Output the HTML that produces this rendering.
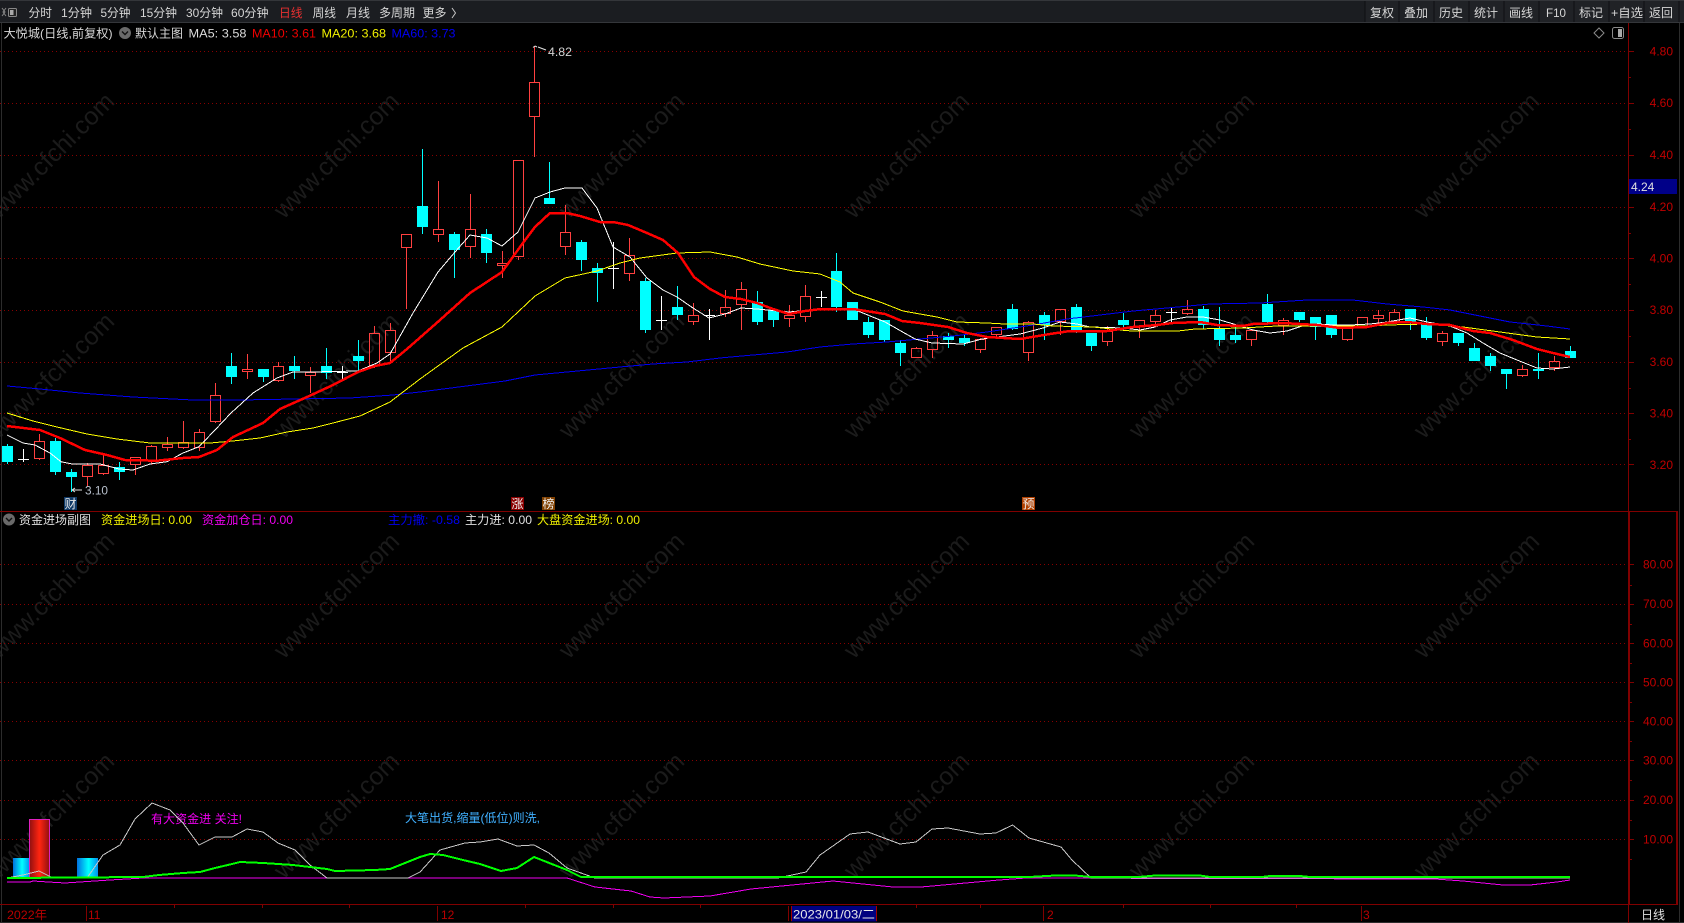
<!DOCTYPE html>
<html lang="zh"><head><meta charset="utf-8"><title>大悦城</title>
<style>
html,body{margin:0;padding:0;background:#000;width:1684px;height:923px;overflow:hidden}
svg{display:block;font-family:"Liberation Sans","Noto Sans CJK SC",sans-serif;font-size:12px}
.tb{fill:#d6d6d6}
.ax{fill:#c00000;text-anchor:end}
.wm text{font-size:25px;fill:#1b1b1b;text-anchor:middle}
</style></head><body>
<svg width="1684" height="923" viewBox="0 0 1684 923" xmlns="http://www.w3.org/2000/svg">
<defs>
<linearGradient id="gc" x1="0" x2="1" y1="0" y2="0"><stop offset="0" stop-color="#0070e0"/><stop offset=".55" stop-color="#00ffff"/><stop offset="1" stop-color="#0090f0"/></linearGradient>
<linearGradient id="gr" x1="0" x2="1" y1="0" y2="0"><stop offset="0" stop-color="#901010"/><stop offset=".5" stop-color="#ff2510"/><stop offset="1" stop-color="#901010"/></linearGradient>
</defs>
<rect width="1684" height="923" fill="#000"/>

<!-- watermarks -->
<g class="wm">
<text x="51" y="164" transform="rotate(-45 51 155)">www.cfchi.com</text><text x="336" y="164" transform="rotate(-45 336 155)">www.cfchi.com</text><text x="621" y="164" transform="rotate(-45 621 155)">www.cfchi.com</text><text x="906" y="164" transform="rotate(-45 906 155)">www.cfchi.com</text><text x="1191" y="164" transform="rotate(-45 1191 155)">www.cfchi.com</text><text x="1476" y="164" transform="rotate(-45 1476 155)">www.cfchi.com</text>
<text x="51" y="384" transform="rotate(-45 51 375)">www.cfchi.com</text><text x="336" y="384" transform="rotate(-45 336 375)">www.cfchi.com</text><text x="621" y="384" transform="rotate(-45 621 375)">www.cfchi.com</text><text x="906" y="384" transform="rotate(-45 906 375)">www.cfchi.com</text><text x="1191" y="384" transform="rotate(-45 1191 375)">www.cfchi.com</text><text x="1476" y="384" transform="rotate(-45 1476 375)">www.cfchi.com</text>
<text x="51" y="604" transform="rotate(-45 51 595)">www.cfchi.com</text><text x="336" y="604" transform="rotate(-45 336 595)">www.cfchi.com</text><text x="621" y="604" transform="rotate(-45 621 595)">www.cfchi.com</text><text x="906" y="604" transform="rotate(-45 906 595)">www.cfchi.com</text><text x="1191" y="604" transform="rotate(-45 1191 595)">www.cfchi.com</text><text x="1476" y="604" transform="rotate(-45 1476 595)">www.cfchi.com</text>
<text x="51" y="824" transform="rotate(-45 51 815)">www.cfchi.com</text><text x="336" y="824" transform="rotate(-45 336 815)">www.cfchi.com</text><text x="621" y="824" transform="rotate(-45 621 815)">www.cfchi.com</text><text x="906" y="824" transform="rotate(-45 906 815)">www.cfchi.com</text><text x="1191" y="824" transform="rotate(-45 1191 815)">www.cfchi.com</text><text x="1476" y="824" transform="rotate(-45 1476 815)">www.cfchi.com</text>
</g>

<!-- toolbar -->
<rect x="0" y="0" width="1684" height="23" fill="#1b1d21"/>
<rect x="0" y="0" width="1684" height="1" fill="#34363a"/>
<rect x="0" y="22" width="1684" height="1" fill="#34363a"/>
<g shape-rendering="crispEdges">
<rect x="1365" y="1" width="319" height="21" fill="#202226"/>
<path d="M1365 1V22M1399 1V22M1434 1V22M1469 1V22M1504 1V22M1539 1V22M1574 1V22M1609 1V22M1644 1V22M1679 1V22" stroke="#0e0f11" stroke-width="1"/>
</g>
<path d="M2 8l3 4-3 4M6 8l-3 4 3 4" fill="none" stroke="#888" stroke-width="1"/>
<rect x="8.5" y="8.5" width="8" height="8" rx="1" fill="#222" stroke="#888"/><rect x="10" y="10" width="3.5" height="5" fill="#aaa"/>
<g class="tb">
<text x="28.5" y="17" textLength="23.5" lengthAdjust="spacingAndGlyphs">分时</text>
<text x="61" y="17" textLength="31" lengthAdjust="spacingAndGlyphs">1分钟</text>
<text x="100.5" y="17" textLength="30" lengthAdjust="spacingAndGlyphs">5分钟</text>
<text x="140" y="17" textLength="37" lengthAdjust="spacingAndGlyphs">15分钟</text>
<text x="186" y="17" textLength="37" lengthAdjust="spacingAndGlyphs">30分钟</text>
<text x="231" y="17" textLength="37.5" lengthAdjust="spacingAndGlyphs">60分钟</text>
<text x="279" y="17" textLength="23.5" lengthAdjust="spacingAndGlyphs" style="fill:#e83030">日线</text>
<text x="312.5" y="17" textLength="23.5" lengthAdjust="spacingAndGlyphs">周线</text>
<text x="346" y="17" textLength="24" lengthAdjust="spacingAndGlyphs">月线</text>
<text x="379" y="17" textLength="36" lengthAdjust="spacingAndGlyphs">多周期</text>
<text x="422.5" y="17" textLength="24" lengthAdjust="spacingAndGlyphs">更多</text>
</g>
<path d="M452 8l3.5 5-3.5 5" fill="none" stroke="#c8c8c8"/>
<g class="tb" text-anchor="start">
<text x="1370" y="17" textLength="24" lengthAdjust="spacingAndGlyphs">复权</text>
<text x="1404" y="17" textLength="24" lengthAdjust="spacingAndGlyphs">叠加</text>
<text x="1439" y="17" textLength="24" lengthAdjust="spacingAndGlyphs">历史</text>
<text x="1474" y="17" textLength="24" lengthAdjust="spacingAndGlyphs">统计</text>
<text x="1509" y="17" textLength="24" lengthAdjust="spacingAndGlyphs">画线</text>
<text x="1546" y="17" textLength="20" lengthAdjust="spacingAndGlyphs">F10</text>
<text x="1579" y="17" textLength="24" lengthAdjust="spacingAndGlyphs">标记</text>
<text x="1611" y="17" textLength="32" lengthAdjust="spacingAndGlyphs">+自选</text>
<text x="1649" y="17" textLength="24" lengthAdjust="spacingAndGlyphs">返回</text>
</g>

<!-- header line -->
<text x="3.5" y="37.5" textLength="109" lengthAdjust="spacingAndGlyphs" fill="#d8d8d8">大悦城(日线,前复权)</text>
<circle cx="125" cy="33" r="6" fill="#6a6a6a"/><path d="M122 31.5l3 3 3-3" fill="none" stroke="#111" stroke-width="1.4"/>
<text x="135" y="37.5" textLength="48" lengthAdjust="spacingAndGlyphs" fill="#d8d8d8">默认主图</text>
<text x="188.5" y="37.5" textLength="58" lengthAdjust="spacingAndGlyphs" fill="#dcdcdc">MA5: 3.58</text>
<text x="252" y="37.5" textLength="64" lengthAdjust="spacingAndGlyphs" fill="#f00000">MA10: 3.61</text>
<text x="321.5" y="37.5" textLength="64.5" lengthAdjust="spacingAndGlyphs" fill="#f0f000">MA20: 3.68</text>
<text x="391.5" y="37.5" textLength="64" lengthAdjust="spacingAndGlyphs" fill="#0000f0">MA60: 3.73</text>
<path d="M1599 28l5 5-5 5-5-5z" fill="none" stroke="#8a8a8a"/>
<rect x="1612.5" y="27.5" width="11" height="11" rx="2" fill="none" stroke="#8a8a8a"/><rect x="1618" y="29" width="4" height="8" fill="#aaa"/>

<!-- grid -->
<g stroke="#880000" stroke-width="1" stroke-dasharray="1 3" shape-rendering="crispEdges">
<path d="M0 51.5H1628M0 103.5H1628M0 155.5H1628M0 207.5H1628M0 258.5H1628M0 310.5H1628M0 362.5H1628M0 413.5H1628M0 464.5H1628"/>
<path d="M0 564.5H1628M0 604.5H1628M0 643.5H1628M0 682.5H1628M0 721.5H1628M0 760.5H1628M0 800.5H1628M0 839.5H1628"/>
</g>

<!-- candles -->
<g shape-rendering="crispEdges" fill="none">
<path stroke="#ff4040" stroke-width="1" d="M34.5 441.5h10v17h-10zM39.5 434V441M39.5 458V460M82.5 465.5h10v11h-10zM87.5 463V465M87.5 476V487M98.5 465.5h10v8h-10zM103.5 453V465M103.5 473V475M130.5 457.5h10v7h-10zM135.5 464V475M146.5 446.5h10v14h-10zM151.5 445V446M151.5 460V464M162.5 444.5h10v3h-10zM167.5 437V444M167.5 447V451M178.5 442.5h10v5h-10zM183.5 421V442M183.5 447V449M194.5 432.5h10v15h-10zM199.5 429V432M199.5 447V451M210.5 395.5h10v26h-10zM215.5 383V395M215.5 421V423M242.5 369.5h10v2h-10zM247.5 354V369M247.5 371V379M273.5 366.5h10v14h-10zM278.5 362V366M278.5 380V382M305.5 372.5h10v3h-10zM310.5 367V372M310.5 375V393M369.5 333.5h10v32h-10zM374.5 326V333M374.5 365V368M385.5 330.5h10v22h-10zM390.5 323V330M390.5 352V363M401.5 234.5h10v13h-10zM406.5 247V309M433.5 229.5h10v5h-10zM438.5 181V229M438.5 234V242M465.5 229.5h10v17h-10zM470.5 194V229M470.5 246V258M497.5 263.5h10v2h-10zM502.5 251V263M502.5 265V278M513.5 160.5h10v96h-10zM518.5 256V260M529.5 82.5h10v34h-10zM534.5 46V82M534.5 116V157M560.5 232.5h10v14h-10zM565.5 205V232M565.5 246V255M624.5 255.5h10v18h-10zM629.5 238V255M629.5 273V281M688.5 315.5h10v6h-10zM693.5 303V315M693.5 321V325M720.5 307.5h10v6h-10zM725.5 290V307M725.5 313V317M736.5 289.5h10v15h-10zM741.5 282V289M741.5 304V330M784.5 315.5h10v3h-10zM789.5 305V315M789.5 318V327M800.5 296.5h10v20h-10zM805.5 285V296M805.5 316V322M911.5 348.5h10v9h-10zM916.5 347V348M916.5 357V358M927.5 335.5h10v14h-10zM932.5 331V335M932.5 349V358M975.5 339.5h10v10h-10zM980.5 338V339M980.5 349V353M991.5 327.5h10v7h-10zM996.5 334V338M1023.5 322.5h10v30h-10zM1028.5 321V322M1028.5 352V361M1055.5 309.5h10v12h-10zM1060.5 321V335M1102.5 331.5h10v10h-10zM1107.5 326V331M1107.5 341V346M1134.5 320.5h10v6h-10zM1139.5 326V338M1150.5 315.5h10v6h-10zM1155.5 310V315M1155.5 321V325M1182.5 309.5h10v4h-10zM1187.5 300V309M1187.5 313V315M1246.5 330.5h10v9h-10zM1251.5 339V346M1278.5 320.5h10v5h-10zM1283.5 318V320M1283.5 325V335M1342.5 327.5h10v12h-10zM1347.5 326V327M1347.5 339V341M1357.5 317.5h10v9h-10zM1373.5 315.5h10v3h-10zM1378.5 310V315M1378.5 318V325M1389.5 312.5h10v9h-10zM1394.5 309V312M1394.5 321V323M1437.5 333.5h10v8h-10zM1442.5 331V333M1442.5 341V346M1517.5 369.5h10v6h-10zM1522.5 365V369M1522.5 375V377M1549.5 361.5h10v6h-10zM1554.5 356V361M1554.5 367V371"/>
<!-- cyan wicks -->
<path stroke="#00ffff" stroke-width="1" d="M7.5 444V464M55.5 438V475M71.5 469V492M119.5 462V480M231.5 353V384M263.5 369V382M294.5 356V379M326.5 348V379M358.5 340V372M422.5 149V234M454.5 232V278M486.5 229V263M549.5 162V204M581.5 240V271M597.5 263V302M645.5 278V333M677.5 286V320M757.5 291V325M773.5 309V327M836.5 253V312M852.5 302V320M868.5 317V338M884.5 320V342M900.5 340V366M948.5 333V348M964.5 335V346M1012.5 304V330M1044.5 312V340M1076.5 304V333M1091.5 333V351M1123.5 313V330M1203.5 306V329M1219.5 307V346M1235.5 327V343M1267.5 294V323M1299.5 312V322M1315.5 317V340M1331.5 315V338M1410.5 309V330M1426.5 317V340M1458.5 333V346M1474.5 343V361M1490.5 353V371M1506.5 369V389M1538.5 353V379M1570.5 346V358"/>
<!-- cyan bodies -->
<path stroke="#00ffff" stroke-width="11" d="M7.5 446V462M55.5 441V472M71.5 472V477M119.5 467V472M231.5 366V377M263.5 369V377M294.5 366V371M326.5 366V373M358.5 356V361M422.5 206V227M454.5 234V250M486.5 234V253M549.5 198V204M581.5 242V260M597.5 268V273M645.5 281V330M677.5 307V315M757.5 302V322M773.5 310V320M836.5 271V307M852.5 302V320M868.5 322V335M884.5 320V340M900.5 343V353M948.5 336V340M964.5 338V343M1012.5 309V329M1044.5 315V325M1076.5 307V330M1091.5 333V346M1123.5 320V325M1203.5 309V325M1219.5 328V340M1235.5 335V340M1267.5 304V322M1299.5 312V320M1315.5 317V327M1331.5 315V335M1410.5 309V323M1426.5 324V338M1458.5 333V343M1474.5 348V361M1490.5 356V366M1506.5 369V374M1538.5 369V371M1570.5 351V358"/>
<!-- crosses -->
<path stroke="#ffffff" stroke-width="1" d="M23.5 449V462M18 459.5H29M342.5 366V379M337 372.5H348M613.5 242V289M608 268.5H619M661.5 296V330M656 320.5H667M709.5 309V340M704 315.5H715M821.5 291V307M816 297.5H827M1171.5 308V322M1166 312.5H1177"/>
</g>

<!-- moving averages -->
<g fill="none" stroke-linejoin="round" shape-rendering="crispEdges">
<polyline stroke="#0000f0" stroke-width="1" points="7,386 40,389 80,393 133,397 193,400 240,400 350,398 393,395 420,392 505,381 535,375 620,367 653,364 687,362 720,358 753,355 787,352 820,347 853,344 887,342 920,339 953,336 987,332 1000,330 1033,325 1067,319 1100,315 1133,311 1167,308 1210,304 1260,303 1307,300 1353,300 1387,304 1423,307 1450,310 1480,316 1510,322 1547,326 1570,329"/>
<polyline stroke="#ffffff" stroke-width="1" points="7,435 23,443 35,445 50,453 61,461.7 72,464 100,464 119,469 133,470 150,464 167,461.7 183,453 199,446.7 215,430 231,413 253,393 277,378 293,372 310,372 358,371 377,363 390,354 413,313 438,272 455,252 470,235 487,238 502,246 518,232 535,198 550,192 565,188 582,188 597,208 613,247 630,257 647,278 663,290 677,297 693,308 709,318 725,314 741,308 757,309 789,312 821,309 853,309 885,322 915,339 932,343 963,344 982,339 997,337 1020,334 1043,328 1060,322 1077,324 1090,327 1123,328 1140,330 1155,327 1170,320 1187,317 1203,317 1220,320 1237,325 1253,330 1270,333 1287,331 1302,326 1318,324 1333,325 1350,325 1370,324 1387,322 1410,318 1427,322 1450,326 1467,333 1483,343 1500,353 1517,360 1537,368 1553,369 1570,367"/>
<polyline stroke="#ffff00" stroke-width="1" points="7,413 33,421 57,427 87,434 117,439 150,443 210,443 233,441 260,438 287,432 313,428 333,423 360,416 390,402 403,392 420,379 463,348 502,327 535,296 565,278 597,271 620,263 640,258 677,253 710,252 737,257 760,264 793,271 820,274 840,282 853,293 880,302 903,311 937,317 957,322 987,323 1005,324 1033,324 1053,326 1093,327 1120,330 1132,331 1178,331 1195,329 1243,328 1277,326 1323,326 1367,326 1387,325 1427,324 1463,327 1500,332 1537,337 1570,339"/>
<polyline stroke="#ff0000" stroke-width="2.5" points="7,426 40,430 60,438 85,450 107,455 125,460 157,460.7 183,458 199,457 217,450 233,437 263,423 280,409 307,397 333,385 358,372 375,366 390,363 407,349 440,320 470,293 502,272 520,247 535,227 550,213 567,213 580,216 600,222 613,222 628,225 647,233 663,240 678,253 694,277 710,289 725,297 741,299 757,303 773,309 789,314 805,311 821,309 853,309 885,314 902,321 920,323 948,327 967,333 987,337 1020,339 1050,334 1070,331 1107,331 1133,327 1157,325 1173,323 1200,322 1217,325 1243,326 1253,324 1283,323 1317,325 1340,328 1367,327 1387,323 1407,322 1427,324 1450,325 1473,331 1490,333 1513,340 1537,349 1553,353 1570,357"/>
</g>

<!-- high/low labels -->
<path d="M535 46l-2 1.5M535 46l2 1M538 47l8 3" fill="none" stroke="#e0e0e0"/>
<text x="548" y="56" textLength="24" lengthAdjust="spacingAndGlyphs" fill="#d4d4d4">4.82</text>
<path d="M72 490h10M72 490l3-2M72 490l3 2" fill="none" stroke="#e0e0e0"/>
<text x="85" y="494.5" textLength="23" lengthAdjust="spacingAndGlyphs" fill="#b8c0cc">3.10</text>

<!-- tags -->
<rect x="64" y="497" width="13" height="13" fill="#103a68"/><text x="64.5" y="508" font-size="12" fill="#e8e8e8">财</text>
<rect x="511" y="497" width="13" height="13" fill="#8b0000"/><text x="511.5" y="508" fill="#f0f0f0">涨</text>
<rect x="542" y="497" width="13" height="13" fill="#804000"/><text x="542.5" y="508" fill="#f0f0f0">榜</text>
<rect x="1022" y="497" width="13" height="13" fill="#b04000"/><text x="1022.5" y="508" fill="#f0f0f0">预</text>

<!-- sub header -->
<circle cx="9" cy="519.5" r="6" fill="#6a6a6a"/><path d="M6 518l3 3 3-3" fill="none" stroke="#111" stroke-width="1.4"/>
<text x="19" y="524" textLength="72" lengthAdjust="spacingAndGlyphs" fill="#e0e0e0">资金进场副图</text>
<text x="101" y="524" textLength="91" lengthAdjust="spacingAndGlyphs" fill="#f0f000">资金进场日: 0.00</text>
<text x="202" y="524" textLength="91" lengthAdjust="spacingAndGlyphs" fill="#f000f0">资金加仓日: 0.00</text>
<text x="388" y="524" textLength="72" lengthAdjust="spacingAndGlyphs" fill="#0000f0">主力撤: -0.58</text>
<text x="465" y="524" textLength="67" lengthAdjust="spacingAndGlyphs" fill="#e0e0e0">主力进: 0.00</text>
<text x="537" y="524" textLength="103" lengthAdjust="spacingAndGlyphs" fill="#f0f000">大盘资金进场: 0.00</text>

<!-- sub chart -->
<rect x="13" y="858" width="16.5" height="20" fill="url(#gc)"/>
<rect x="77" y="858" width="21" height="20" fill="url(#gc)"/>
<rect x="29.5" y="819.5" width="20" height="58" fill="url(#gr)" stroke="#e020c0" stroke-width="1"/>
<text x="151" y="823" textLength="91" lengthAdjust="spacingAndGlyphs" fill="#f000f0">有大资金进 关注!</text>
<text x="405" y="822" textLength="135" lengthAdjust="spacingAndGlyphs" fill="#40b0ff">大笔出货,缩量(低位)则洗,</text>
<g fill="none" shape-rendering="crispEdges">
<polyline stroke="#f000f0" stroke-width="1" points="7,882 30,882 33,881 48,882 65,883 80,882 110,880 127,879 143,878 567,878 595,887 631,891 650,897 664,898 710,896 751,889 833,881 893,887 921,887 999,880 1026,878 1435,879 1463,881 1503,885 1530,885 1557,882 1570,880"/>
<polyline stroke="#c8c8c8" stroke-width="1" points="7,878 23,875 39,871 53,878 87,878 103,855 120,845 135,819 152,803 170,810 183,823 199,845 215,837 232,837 247,829 263,832 278,843 295,850 310,865 327,878 408,878 420,872 440,850 465,843 480,842 498,839 517,846 534,845 549,853 567,868 595,878 778,878 806,872 820,855 850,834 868,832 900,844 916,842 932,829 948,828 980,834 996,833 1012.6,825 1029,838 1061,847 1072,860 1091,878 1570,878"/>
<polyline stroke="#00ff00" stroke-width="2" points="7,878 143,877 159,875 183,873 200,872 215,868 232,864 240,862 263,863 293,865 327,869 335,871 375,870 390,869 420,857 430,854 443,855 463,860 480,864 501,871 517,868 534,857 567,870 581,877 1029,877 1052,875.7 1077,875.7 1091,877 1139,877 1155,875.5 1200,875.5 1210,877 1262,877 1270,876 1300,876 1310,877 1570,877"/>
</g>

<!-- frame + axes -->
<g shape-rendering="crispEdges" fill="none">
<path stroke="#2c2c2c" d="M1.5 23V923M1679.5 23V923M0 922.5H1684"/>
<path stroke="#800000" stroke-width="1" d="M1628.5 23V511M0 511.5H1678"/>
<path stroke="#800000" stroke-width="2" d="M1629 511V905M1677 511V905"/>
<path stroke="#800000" stroke-width="1" d="M0 904.5H1678M1628.5 905V923"/>
<!-- axis ticks -->
<path stroke="#800000" stroke-width="1" d="M1628 51.5h6M1628 103.5h6M1628 155.5h6M1628 207.5h6M1628 258.5h6M1628 310.5h6M1628 362.5h6M1628 413.5h6M1628 464.5h6M1628 77.5h3M1628 129.5h3M1628 181.5h3M1628 233.5h3M1628 284.5h3M1628 336.5h3M1628 388.5h3M1628 439.5h3M1630 564.5h4M1630 604.5h4M1630 643.5h4M1630 682.5h4M1630 721.5h4M1630 760.5h4M1630 800.5h4M1630 839.5h4M1630 820.5h2M1630 780.5h2M1630 741.5h2M1630 702.5h2M1630 663.5h2M1630 624.5h2M1630 585.5h2M1630 859.5h2"/>
<!-- date ticks -->
<path stroke="#800000" stroke-width="1" d="M86.5 906V921M437.5 906V921M788.5 906V921M1043.5 906V921M1361.5 906V921M174.5 905v3M262.5 905v3M349.5 905v3M525.5 905v3M613.5 905v3M700.5 905v3M916.5 905v3M980.5 905v3M1123.5 905v3M1210.5 905v3M1296.5 905v3"/>
</g>

<!-- axis labels -->
<g class="ax">
<text x="1673" y="55.5">4.80</text><text x="1673" y="107">4.60</text><text x="1673" y="159">4.40</text><text x="1673" y="211">4.20</text><text x="1673" y="262.5">4.00</text><text x="1673" y="314">3.80</text><text x="1673" y="366">3.60</text><text x="1673" y="417.5">3.40</text><text x="1673" y="469">3.20</text>
<text x="1673" y="568.5">80.00</text><text x="1673" y="608">70.00</text><text x="1673" y="647.5">60.00</text><text x="1673" y="686.5">50.00</text><text x="1673" y="725.5">40.00</text><text x="1673" y="764.5">30.00</text><text x="1673" y="804">20.00</text><text x="1673" y="843.5">10.00</text>
</g>
<rect x="1629" y="179" width="48" height="15" fill="#000088"/>
<text x="1631" y="191" fill="#e0e0e0">4.24</text>

<!-- date axis -->
<text x="7" y="919" textLength="40" lengthAdjust="spacingAndGlyphs" fill="#b80000">2022年</text>
<text x="88" y="919" fill="#b80000">11</text>
<text x="441" y="919" fill="#b80000">12</text>
<text x="1047" y="919" fill="#b80000">2</text>
<text x="1363" y="919" fill="#b80000">3</text>
<rect x="791" y="906" width="86" height="15.5" fill="#000080"/>
<path d="M791.5 906V921M876.5 906V921" stroke="#a00000" shape-rendering="crispEdges"/>
<text x="793" y="918.5" textLength="82" lengthAdjust="spacingAndGlyphs" fill="#e8e8e8">2023/01/03/二</text>
<text x="1641" y="919" textLength="24" lengthAdjust="spacingAndGlyphs" fill="#e0e0e0">日线</text>
</svg>
</body></html>
